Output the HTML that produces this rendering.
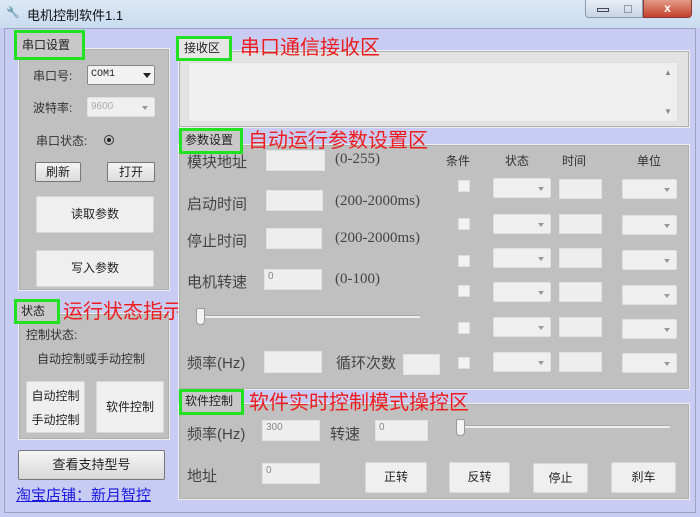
<!DOCTYPE html><html><head><meta charset="utf-8"><style>
*{margin:0;padding:0;box-sizing:border-box}
body{width:700px;height:517px;overflow:hidden;position:relative;background:#c9ccf2;font-family:"Liberation Sans","Noto Sans CJK SC",sans-serif;font-size:12px;color:#222}
.a{position:absolute}
.grp{position:absolute;background:#c0c0c0;border:1px solid #eeeeee;box-shadow:inset 0 0 0 1px #b0b0b0}
.gl{position:absolute;border:3px solid #22e022;background:#c8c8c8;font-size:12px;padding:0 5px;line-height:18px;color:#222}
.red{position:absolute;color:#ee1c1c;font-size:20px;white-space:nowrap;line-height:22px}
.box{position:absolute;background:#eeeeee;border:1px solid #e2e2e2;font-size:10px;color:#888;padding-left:3px;line-height:14px}
.cb{position:absolute;width:12px;height:12px;background:#f2f2f2;border:1px solid #ddd}
.cmb{position:absolute;background:#efefef;border:1px solid #e0e0e0;border-radius:2px}
.cmb:after{content:"";position:absolute;right:6px;top:8px;border:3px solid transparent;border-top:4px solid #999}
.btn{position:absolute;background:#efefef;border:1px solid #d8d8d8;border-radius:2px;text-align:center;font-size:12px}
.t{position:absolute;white-space:nowrap;color:#333}
.big{font-size:15px;color:#444}
</style></head><body>
<div class="a" style="left:0;top:0;width:700px;height:28px;background:linear-gradient(#dbe7f4,#c9dcf0)"></div>
<div class="t" style="left:6px;top:6px;font-size:11px;color:#556">🔧</div>
<div class="t" style="left:27px;top:5px;font-size:13px;color:#111">电机控制软件1.1</div>
<div class="a" style="left:585px;top:0;width:58px;height:18px;background:linear-gradient(#e8eef6,#c8d4e4);border:1px solid #8a9ab0;border-top:none;border-radius:0 0 0 4px"></div>
<div class="a" style="left:597px;top:8px;width:12px;height:4px;border:1px solid #445"></div>
<div class="a" style="left:624px;top:5px;width:8px;height:8px;border:1px solid #99a"></div>
<div class="a" style="left:643px;top:0;width:49px;height:18px;background:linear-gradient(#e29a88,#c4412c);border:1px solid #8a3a30;border-top:none;border-radius:0 0 4px 0;color:#fff;text-align:center;font-weight:bold;font-size:12px;line-height:16px">x</div>
<div class="a" style="left:4px;top:28px;width:692px;height:485px;border:1px solid #9aa4c0;background:#c9ccf2"></div>

<div class="grp" style="left:18px;top:48px;width:152px;height:243px"></div>
<div class="gl" style="left:14px;top:30px;width:71px;height:30px;padding-top:3px;font-size:12px">串口设置</div>
<div class="t" style="left:33px;top:67px;font-size:12px">串口号:</div>
<div class="a" style="left:87px;top:65px;width:68px;height:20px;background:#f2f2f2;border:1px solid #888;border-radius:2px;font-size:10px;padding:3px 3px;font-family:'Liberation Mono',monospace">COM1</div>
<div class="a" style="left:143px;top:73px;border:4px solid transparent;border-top:5px solid #222"></div>
<div class="t" style="left:33px;top:99px">波特率:</div>
<div class="cmb" style="left:87px;top:97px;width:68px;height:20px;font-size:10px;color:#aaa;padding:3px">9600</div>
<div class="t" style="left:36px;top:132px">串口状态:</div>
<div class="a" style="left:104px;top:135px;width:10px;height:10px;border:1px solid #333;border-radius:50%"></div>
<div class="a" style="left:107px;top:138px;width:4px;height:4px;background:#222;border-radius:50%"></div>
<div class="btn" style="left:35px;top:162px;width:46px;height:20px;border-color:#777;line-height:18px;background:linear-gradient(#f4f4f4,#dcdcdc)">刷新</div>
<div class="btn" style="left:107px;top:162px;width:48px;height:20px;border-color:#777;line-height:18px;background:linear-gradient(#f4f4f4,#dcdcdc)">打开</div>
<div class="btn" style="left:36px;top:196px;width:118px;height:37px;line-height:35px">读取参数</div>
<div class="btn" style="left:36px;top:250px;width:118px;height:37px;line-height:35px">写入参数</div>

<div class="grp" style="left:18px;top:313px;width:152px;height:127px"></div>
<div class="gl" style="left:14px;top:299px;width:46px;height:25px;padding:0 4px;line-height:18px">状态</div>
<div class="red" style="left:63px;top:301px">运行状态指示</div>
<div class="t" style="left:26px;top:326px">控制状态:</div>
<div class="t" style="left:37px;top:350px">自动控制或手动控制</div>
<div class="btn" style="left:26px;top:381px;width:59px;height:52px;line-height:24px;padding-top:2px">自动控制<br>手动控制</div>
<div class="btn" style="left:96px;top:381px;width:68px;height:52px;line-height:50px">软件控制</div>
<div class="btn" style="left:18px;top:450px;width:147px;height:30px;line-height:28px;border-color:#777;background:linear-gradient(#f6f6f6,#d8d8d8);font-size:13px">查看支持型号</div>
<div class="t" style="left:16px;top:484px;font-size:15px;color:#1a1ae0;text-decoration:underline">淘宝店铺：新月智控</div>

<div class="grp" style="left:178px;top:50px;width:512px;height:78px;background:#e2e2e2"></div>
<div class="gl" style="left:176px;top:36px;width:56px;height:25px;line-height:18px;background:#e6e6e6">接收区</div>
<div class="red" style="left:240px;top:37px">串口通信接收区</div>
<div class="a" style="left:188px;top:62px;width:490px;height:60px;background:#efefef;border:1px solid #ddd"></div>
<div class="t" style="left:664px;top:68px;font-size:8px;color:#888">▲</div>
<div class="t" style="left:664px;top:107px;font-size:8px;color:#888">▼</div>

<div class="grp" style="left:178px;top:144px;width:512px;height:246px"></div>
<div class="gl" style="left:179px;top:128px;width:64px;height:26px;line-height:18px;padding:0 3px">参数设置</div>
<div class="red" style="left:248px;top:130px">自动运行参数设置区</div>
<div class="t big" style="left:187px;top:151px">模块地址</div>
<div class="box" style="left:266px;top:150px;width:59px;height:21px"></div>
<div class="t big" style="left:335px;top:151px;font-family:'Liberation Serif','Noto Serif CJK SC',serif">(0-255)</div>
<div class="t big" style="left:187px;top:193px">启动时间</div>
<div class="box" style="left:266px;top:190px;width:57px;height:21px"></div>
<div class="t big" style="left:335px;top:193px;font-family:'Liberation Serif','Noto Serif CJK SC',serif">(200-2000ms)</div>
<div class="t big" style="left:187px;top:230px">停止时间</div>
<div class="box" style="left:266px;top:228px;width:56px;height:21px"></div>
<div class="t big" style="left:335px;top:230px;font-family:'Liberation Serif','Noto Serif CJK SC',serif">(200-2000ms)</div>
<div class="t big" style="left:187px;top:271px">电机转速</div>
<div class="box" style="left:264px;top:269px;width:58px;height:21px">0</div>
<div class="t big" style="left:335px;top:271px;font-family:'Liberation Serif','Noto Serif CJK SC',serif">(0-100)</div>
<div class="a" style="left:200px;top:315px;width:220px;height:3px;background:#eee;border-top:1px solid #aaa"></div>
<div class="a" style="left:196px;top:308px;width:9px;height:17px;background:#f4f4f4;border:1px solid #999;border-radius:2px 2px 4px 4px"></div>
<div class="t big" style="left:187px;top:352px">频率(Hz)</div>
<div class="box" style="left:264px;top:351px;width:58px;height:22px"></div>
<div class="t big" style="left:336px;top:352px">循环次数</div>
<div class="box" style="left:403px;top:354px;width:37px;height:21px"></div>
<div class="t" style="left:446px;top:152px">条件</div>
<div class="t" style="left:505px;top:152px">状态</div>
<div class="t" style="left:562px;top:152px">时间</div>
<div class="t" style="left:637px;top:152px">单位</div>
<div class="cb" style="left:458px;top:180px"></div>
<div class="cb" style="left:458px;top:218px"></div>
<div class="cb" style="left:458px;top:255px"></div>
<div class="cb" style="left:458px;top:285px"></div>
<div class="cb" style="left:458px;top:322px"></div>
<div class="cb" style="left:458px;top:357px"></div>
<div class="cmb" style="left:493px;top:178px;width:58px;height:20px"></div>
<div class="cmb" style="left:493px;top:214px;width:58px;height:20px"></div>
<div class="cmb" style="left:493px;top:248px;width:58px;height:20px"></div>
<div class="cmb" style="left:493px;top:282px;width:58px;height:20px"></div>
<div class="cmb" style="left:493px;top:317px;width:58px;height:20px"></div>
<div class="cmb" style="left:493px;top:352px;width:58px;height:20px"></div>
<div class="box" style="left:559px;top:179px;width:43px;height:20px"></div>
<div class="box" style="left:559px;top:214px;width:43px;height:20px"></div>
<div class="box" style="left:559px;top:248px;width:43px;height:20px"></div>
<div class="box" style="left:559px;top:282px;width:43px;height:20px"></div>
<div class="box" style="left:559px;top:317px;width:43px;height:20px"></div>
<div class="box" style="left:559px;top:352px;width:43px;height:20px"></div>
<div class="cmb" style="left:622px;top:179px;width:55px;height:20px"></div>
<div class="cmb" style="left:622px;top:215px;width:55px;height:20px"></div>
<div class="cmb" style="left:622px;top:250px;width:55px;height:20px"></div>
<div class="cmb" style="left:622px;top:285px;width:55px;height:20px"></div>
<div class="cmb" style="left:622px;top:319px;width:55px;height:20px"></div>
<div class="cmb" style="left:622px;top:353px;width:55px;height:20px"></div>

<div class="grp" style="left:178px;top:403px;width:512px;height:97px"></div>
<div class="gl" style="left:179px;top:389px;width:65px;height:26px;line-height:18px;padding:0 3px">软件控制</div>
<div class="red" style="left:249px;top:392px">软件实时控制模式操控区</div>
<div class="t big" style="left:187px;top:423px">频率(Hz)</div>
<div class="box" style="left:262px;top:420px;width:58px;height:21px">300</div>
<div class="t big" style="left:330px;top:423px">转速</div>
<div class="box" style="left:375px;top:420px;width:53px;height:21px">0</div>
<div class="a" style="left:460px;top:425px;width:210px;height:3px;background:#eee;border-top:1px solid #aaa"></div>
<div class="a" style="left:456px;top:419px;width:9px;height:17px;background:#f4f4f4;border:1px solid #999;border-radius:2px 2px 4px 4px"></div>
<div class="t big" style="left:187px;top:465px">地址</div>
<div class="box" style="left:262px;top:463px;width:58px;height:21px">0</div>
<div class="btn" style="left:365px;top:462px;width:62px;height:31px;line-height:29px">正转</div>
<div class="btn" style="left:449px;top:462px;width:61px;height:31px;line-height:29px">反转</div>
<div class="btn" style="left:533px;top:463px;width:55px;height:30px;line-height:28px">停止</div>
<div class="btn" style="left:611px;top:462px;width:65px;height:31px;line-height:29px">刹车</div>
</body></html>
